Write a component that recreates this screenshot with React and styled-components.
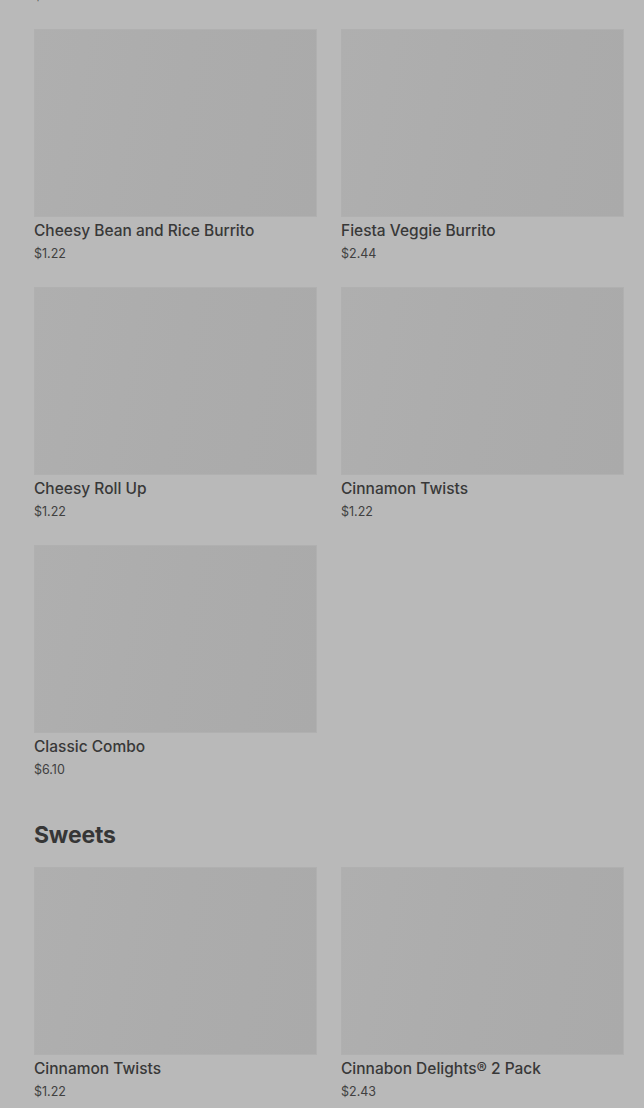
import React from "react";
import styled, { createGlobalStyle } from "styled-components";

const Global = createGlobalStyle`
  html, body {
    margin: 0;
    padding: 0;
    background: #b9b9b9;
    overflow: hidden;
  }
  body {
    font-family: Inter, "Noto Sans", "Liberation Sans", sans-serif;
    color: #3a3a3a;
  }
`;

const Page = styled.div`
  width: 644px;
  height: 1108px;
  overflow: hidden;
  background: #b9b9b9;
  box-sizing: border-box;
  padding: 0 20px 0 34px;
`;

const Scroller = styled.div`
  margin-top: -229px;
`;

const Section = styled.section`
  margin-bottom: 40px;
`;

const Heading = styled.h2`
  margin: 0 0 16px;
  font-size: 23px;
  line-height: 32px;
  font-weight: 700;
  color: #363636;
  letter-spacing: -0.2px;
`;

const Grid = styled.div`
  display: grid;
  grid-template-columns: 283px 283px;
  column-gap: 24px;
  row-gap: 24px;
`;

const Card = styled.div`
  display: flex;
  flex-direction: column;
`;

const Thumb = styled.div`
  height: 188px;
  background: linear-gradient(100deg, #afafaf 0%, #acacac 50%, #aaaaaa 100%);
  box-shadow: inset 0 0 0 1px #b0b0b0;
`;

const Name = styled.div`
  margin-top: 4px;
  font-size: 15.5px;
  line-height: 20px;
  font-weight: 500;
  color: #383838;
  white-space: nowrap;
`;

const Price = styled.div`
  margin-top: 4px;
  font-size: 12.5px;
  line-height: 18px;
  color: #404040;
`;

const sections = [
  {
    title: null,
    items: [{ name: "Spicy Potato Soft Taco", price: "$1.22" }],
  },
  {
    title: null,
    items: [
      { name: "Cheesy Bean and Rice Burrito", price: "$1.22" },
      { name: "Fiesta Veggie Burrito", price: "$2.44" },
      { name: "Cheesy Roll Up", price: "$1.22" },
      { name: "Cinnamon Twists", price: "$1.22" },
      { name: "Classic Combo", price: "$6.10" },
    ],
  },
  {
    title: "Sweets",
    items: [
      { name: "Cinnamon Twists", price: "$1.22" },
      { name: "Cinnabon Delights® 2 Pack", price: "$2.43" },
    ],
  },
];

function Item({ item }) {
  return (
    <Card>
      <Thumb />
      <Name>{item.name}</Name>
      <Price>{item.price}</Price>
    </Card>
  );
}

export default function App() {
  return (
    <Page>
      <Global />
      <Scroller>
        <Grid style={{ marginBottom: 24 }}>
          {sections[0].items.map((it, i) => (
            <Item key={`pre_${i}`} item={it} />
          ))}
        </Grid>
        {sections.slice(1).map((s, si) => (
          <Section key={`sec_${si}`}>
            {s.title ? <Heading>{s.title}</Heading> : null}
            <Grid>
              {s.items.map((it, i) => (
                <Item key={`sec_${si}_${i}`} item={it} />
              ))}
            </Grid>
          </Section>
        ))}
      </Scroller>
    </Page>
  );
}
